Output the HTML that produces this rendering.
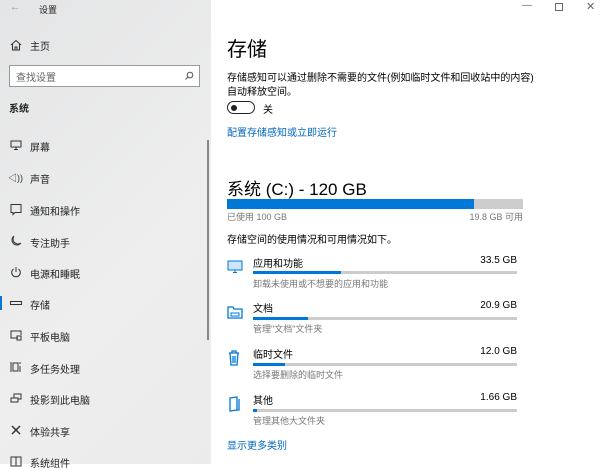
<!DOCTYPE html>
<html><head><meta charset="utf-8"><style>
*{margin:0;padding:0;box-sizing:border-box}
body{width:600px;height:464px;overflow:hidden;font-family:"Liberation Sans","Noto Sans CJK SC",sans-serif;background:#fff;position:relative;color:#000}
.side{position:absolute;left:0;top:0;width:211px;height:464px;background:linear-gradient(135deg,#e4e5e6,#eeeeee 60%,#ebebeb)}
.a{position:absolute;font-size:10px;white-space:nowrap}
.r{position:absolute;font-size:10px;white-space:nowrap;right:83px}
.ic{position:absolute;left:9px;width:14px;height:14px}
.t{position:absolute;font-size:10px;white-space:nowrap;color:#222}
.bar{position:absolute;height:3px;background:#ccc;left:253px;width:264px}
.bar i{display:block;height:3px;background:#0078d7}
.g{color:#777;font-size:9px}
</style></head><body>
<div class="side">
<div class="a" style="left:10px;top:2px;color:#888">←</div>
<div class="a" style="left:39px;top:3px;font-size:9px;color:#222">设置</div>
<svg class="ic" style="top:38px" viewBox="0 0 14 14"><path d="M2 7L7 2.5 12 7M3.5 6v6h7V6M6 12V9h2v3" fill="none" stroke="#333"/></svg>
<div class="t" style="left:30px;top:38px">主页</div>
<div style="position:absolute;left:9px;top:65px;width:191px;height:22px;border:1px solid #999;background:#fff"></div>
<div class="t" style="left:16px;top:69px;color:#666">查找设置</div>
<svg style="position:absolute;left:184px;top:71px" width="10" height="10" viewBox="0 0 10 10"><circle cx="6" cy="4" r="2.8" fill="none" stroke="#555"/><path d="M4 6L1.5 8.5" stroke="#555"/></svg>
<div class="t" style="left:9px;top:100px;font-weight:bold">系统</div>
<div style="position:absolute;left:207px;top:140px;width:2px;height:200px;background:#888"></div>
<svg class="ic" style="top:138px" viewBox="0 0 14 14"><path d="M2 3h10v6H2zM5 11.5h4M7 9v2.5" fill="none" stroke="#333"/></svg>
<div class="t" style="left:30px;top:139px">屏幕</div>
<div class="t" style="left:8px;top:171px;font-size:9px;color:#333">◁))</div>
<div class="t" style="left:30px;top:171px">声音</div>
<svg class="ic" style="top:202px" viewBox="0 0 14 14"><path d="M2 2.5h10v8H6l-2 2v-2H2z" fill="none" stroke="#333"/></svg>
<div class="t" style="left:30px;top:203px">通知和操作</div>
<svg class="ic" style="top:234px" viewBox="0 0 14 14"><path d="M5 2a5 5 0 1 0 7 7A5 5 0 0 1 5 2z" fill="none" stroke="#333"/></svg>
<div class="t" style="left:30px;top:235px">专注助手</div>
<svg class="ic" style="top:265px" viewBox="0 0 14 14"><path d="M4.5 4a4.3 4.3 0 1 0 5 0M7 2v5" fill="none" stroke="#333"/></svg>
<div class="t" style="left:30px;top:266px">电源和睡眠</div>
<div style="position:absolute;left:0;top:296px;width:2px;height:14px;background:#0078d7"></div>
<svg class="ic" style="top:296px" viewBox="0 0 14 14"><rect x="1.5" y="5.5" width="11" height="3" fill="none" stroke="#333"/></svg>
<div class="t" style="left:30px;top:297px">存储</div>
<svg class="ic" style="top:328px" viewBox="0 0 14 14"><path d="M9 10H2V3h10v4M8 8h4v4H8z" fill="none" stroke="#333"/></svg>
<div class="t" style="left:30px;top:329px">平板电脑</div>
<svg class="ic" style="top:360px" viewBox="0 0 14 14"><path d="M2 2v10M4 3h5v8H4zM11 2v2M11 6v6" fill="none" stroke="#333"/></svg>
<div class="t" style="left:30px;top:361px">多任务处理</div>
<svg class="ic" style="top:391px" viewBox="0 0 14 14"><path d="M2 7h7v4H2zM5 7V3h7v5h-3" fill="none" stroke="#333"/></svg>
<div class="t" style="left:30px;top:392px">投影到此电脑</div>
<svg class="ic" style="top:423px" viewBox="0 0 14 14"><path d="M3 3l8 8M11 3l-8 8" stroke="#333" stroke-width="1.5"/></svg>
<div class="t" style="left:30px;top:424px">体验共享</div>
<svg class="ic" style="top:455px" viewBox="0 0 14 14"><path d="M2 2h10v9H2zM7 2v9" fill="none" stroke="#333"/></svg>
<div class="t" style="left:30px;top:455px">系统组件</div>
</div>
<div class="a" style="left:522px;top:0;color:#666">—</div>
<div style="position:absolute;left:555px;top:3px;width:8px;height:8px;border:1px solid #666"></div>
<div class="a" style="left:586px;top:0;color:#666;font-size:11px">✕</div>
<div class="a" style="left:227px;top:33px;font-size:20px">存储</div>
<div class="a" style="left:227px;top:69px">存储感知可以通过删除不需要的文件(例如临时文件和回收站中的内容)</div>
<div class="a" style="left:227px;top:83px">自动释放空间。</div>
<div style="position:absolute;left:227px;top:101px;width:28px;height:13px;border:1.5px solid #222;border-radius:7px"></div>
<div style="position:absolute;left:231px;top:104.5px;width:6px;height:6px;border-radius:3px;background:#222"></div>
<div class="a" style="left:263px;top:101px">关</div>
<div class="a" style="left:227px;top:124px;color:#0067c0">配置存储感知或立即运行</div>
<div class="a" style="left:227px;top:175px;font-size:17px">系统 (C:) - 120 GB</div>
<div style="position:absolute;left:227px;top:199px;width:296px;height:10px;background:#ccc"><div style="width:247px;height:10px;background:#0078d7"></div></div>
<div class="a g" style="left:227px;top:210px">已使用 100 GB</div>
<div class="a g" style="right:77px;top:210px">19.8 GB 可用</div>
<div class="a" style="left:227px;top:231px">存储空间的使用情况和可用情况如下。</div>

<svg style="position:absolute;left:227px;top:260px" width="16" height="14" viewBox="0 0 16 14"><rect x="1" y="1" width="14" height="9" fill="#cde6fb" stroke="#0078d7"/><path d="M6 12.5h4M8 10v2.5" stroke="#0078d7"/></svg>
<div class="a" style="left:253px;top:255px">应用和功能</div>
<div class="r" style="top:255px">33.5 GB</div>
<div class="bar" style="top:271px"><i style="width:88px"></i></div>
<div class="a g" style="left:253px;top:277px">卸载未使用或不想要的应用和功能</div>

<svg style="position:absolute;left:227px;top:305px" width="16" height="14" viewBox="0 0 16 14"><path d="M1 2h5l1 2h8v9H1z" fill="none" stroke="#0078d7" stroke-width="1.3"/><path d="M4 8h8v3H4z" fill="none" stroke="#0078d7"/></svg>
<div class="a" style="left:253px;top:300px">文档</div>
<div class="r" style="top:300px">20.9 GB</div>
<div class="bar" style="top:317px"><i style="width:55px"></i></div>
<div class="a g" style="left:253px;top:322px">管理"文档"文件夹</div>

<svg style="position:absolute;left:228px;top:350px" width="12" height="16" viewBox="0 0 12 16"><path d="M1 3h10M4 3V1h4v2M2 3l1 12h6l1-12M5 6v7M7 6v7" fill="none" stroke="#0078d7" stroke-width="1.3"/></svg>
<div class="a" style="left:253px;top:346px">临时文件</div>
<div class="r" style="top:346px">12.0 GB</div>
<div class="bar" style="top:363px"><i style="width:32px"></i></div>
<div class="a g" style="left:253px;top:368px">选择要删除的临时文件</div>

<svg style="position:absolute;left:228px;top:396px" width="12" height="16" viewBox="0 0 12 16"><path d="M2 2l7 -1v13l-7 1zM9 14h2V3" fill="none" stroke="#0078d7" stroke-width="1.3"/></svg>
<div class="a" style="left:253px;top:392px">其他</div>
<div class="r" style="top:392px">1.66 GB</div>
<div class="bar" style="top:409px"><i style="width:4px"></i></div>
<div class="a g" style="left:253px;top:414px">管理其他大文件夹</div>

<div class="a" style="left:227px;top:437px;color:#0067c0">显示更多类别</div>
</body></html>
